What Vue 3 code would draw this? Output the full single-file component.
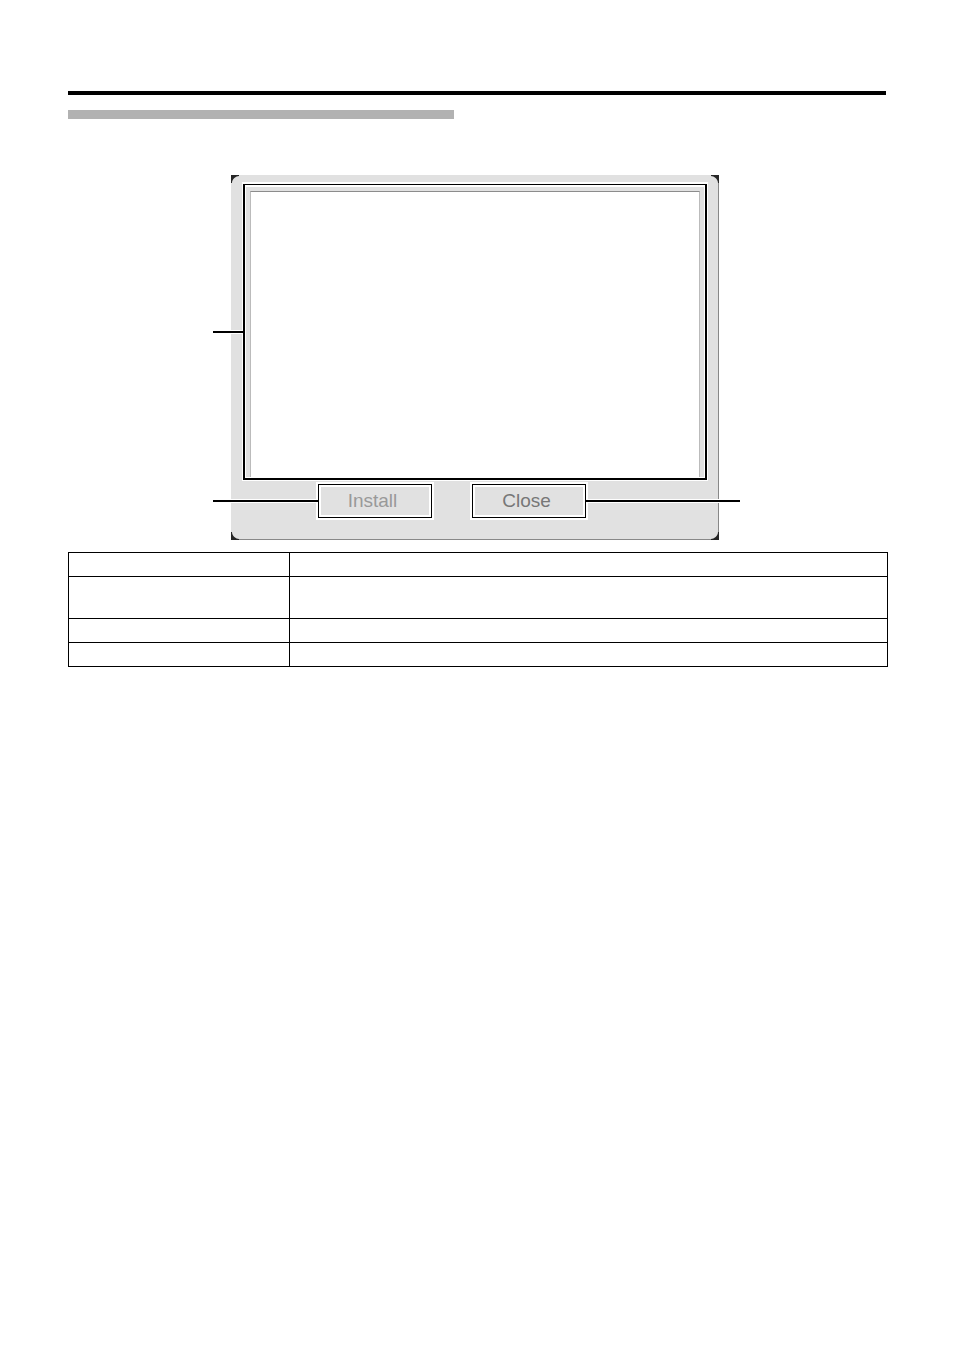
<template>
  <main class="page">
    <div class="page-rule"></div>
    <div class="section-bar"></div>

    <section class="dialog">
      <svg
        v-for="c in corners"
        :key="c"
        :class="['corner', c]"
        width="8"
        height="8"
        viewBox="0 0 8 8"
        aria-hidden="true"
      >
        <path d="M0 0H8V1C5 1 1 4 1 8H0Z" fill="#262626" />
      </svg>

      <div class="frame">
        <div class="bezel">
          <div class="pane"></div>
        </div>
        <span class="leader leader-frame"></span>
      </div>

      <div class="actions">
        <button type="button" class="btn btn-install">
          Install
          <span class="leader leader-install"></span>
        </button>
        <button type="button" class="btn btn-close">
          Close
          <span class="leader leader-close"></span>
        </button>
      </div>
    </section>

    <table class="items">
      <tbody>
        <tr v-for="(row, i) in rows" :key="i" :class="{ tall: row.tall }">
          <td class="name">{{ row.name }}</td>
          <td>{{ row.description }}</td>
        </tr>
      </tbody>
    </table>
  </main>
</template>

<script setup>
const corners = ['top-left', 'top-right', 'bottom-left', 'bottom-right']

const rows = [
  { name: '', description: '', tall: false },
  { name: '', description: '', tall: true },
  { name: '', description: '', tall: false },
  { name: '', description: '', tall: false }
]
</script>

<style>
body {
  margin: 0;
  background: #fff;
}
</style>

<style scoped>
.page {
  padding: 91px 66px 40px 68px;
  font-family: "Liberation Sans", Arial, sans-serif;
}

.page-rule {
  height: 4px;
  margin-right: 2px;
  background: #000;
}

.section-bar {
  width: 386px;
  max-width: 100%;
  height: 9px;
  margin-top: 15px;
  background: #b2b2b2;
}

.dialog {
  position: relative;
  box-sizing: border-box;
  width: 488px;
  max-width: 100%;
  margin: 56px 0 12px 163px;
  padding: 9px 11px 21px 12px;
  background: #e1e1e1;
  border-right: 1px solid #888;
  border-bottom: 1px solid #888;
}

.corner {
  position: absolute;
}

.top-left {
  top: 0;
  left: 0;
}

.top-right {
  top: 0;
  right: -1px;
  transform: scaleX(-1);
}

.bottom-left {
  bottom: -1px;
  left: 0;
  transform: scaleY(-1);
}

.bottom-right {
  right: -1px;
  bottom: -1px;
  transform: scale(-1);
}

.frame {
  position: relative;
  padding: 2px 1px 1px;
  background: #fff;
  border: solid #000;
  border-width: 1px 2px 2px;
  box-shadow: 0 0 0 1px #fff, 0 -1px 0 1px #fff;
}

.bezel {
  border: solid #e1e1e1;
  border-width: 4px 4px 0;
}

.pane {
  height: 285px;
  background: #fff;
  border: 1px solid #bbb;
  border-top-color: #8c8c8c;
  border-bottom: 0;
}

.actions {
  display: flex;
  gap: 40px;
  margin-top: 4px;
  padding-left: 75px;
}

.btn {
  position: relative;
  width: 114px;
  height: 34px;
  padding: 0 5px 0 0;
  background: #e1e1e1;
  border: 1px solid #000;
  border-radius: 0;
  box-shadow: 0 0 0 2px #fff, inset 0 0 0 2px #fff;
  font-family: inherit;
  font-size: 19px;
  line-height: 24px;
}

.btn-install {
  color: #999;
}

.btn-close {
  color: #777;
}

/* callout lines, white edged where they cross the dialog */
.leader {
  position: absolute;
  height: 2px;
  background: #000;
  box-shadow: 0 -1px 0 #fff, 0 1px 0 #fff;
}

.leader-frame {
  top: 146px;
  right: calc(100% + 2px);
  width: 30px;
}

.leader-install {
  top: 15px;
  right: calc(100% + 1px);
  width: 105px;
}

.leader-close {
  top: 15px;
  left: calc(100% + 1px);
  width: 154px;
}

.items {
  width: 100%;
  border-collapse: collapse;
  table-layout: fixed;
}

.items td {
  box-sizing: border-box;
  height: 24px;
  padding: 0 8px;
  border: 1px solid #000;
  font-size: 13px;
}

.items .tall td {
  height: 42px;
}

.items .name {
  width: 27%;
}
</style>
